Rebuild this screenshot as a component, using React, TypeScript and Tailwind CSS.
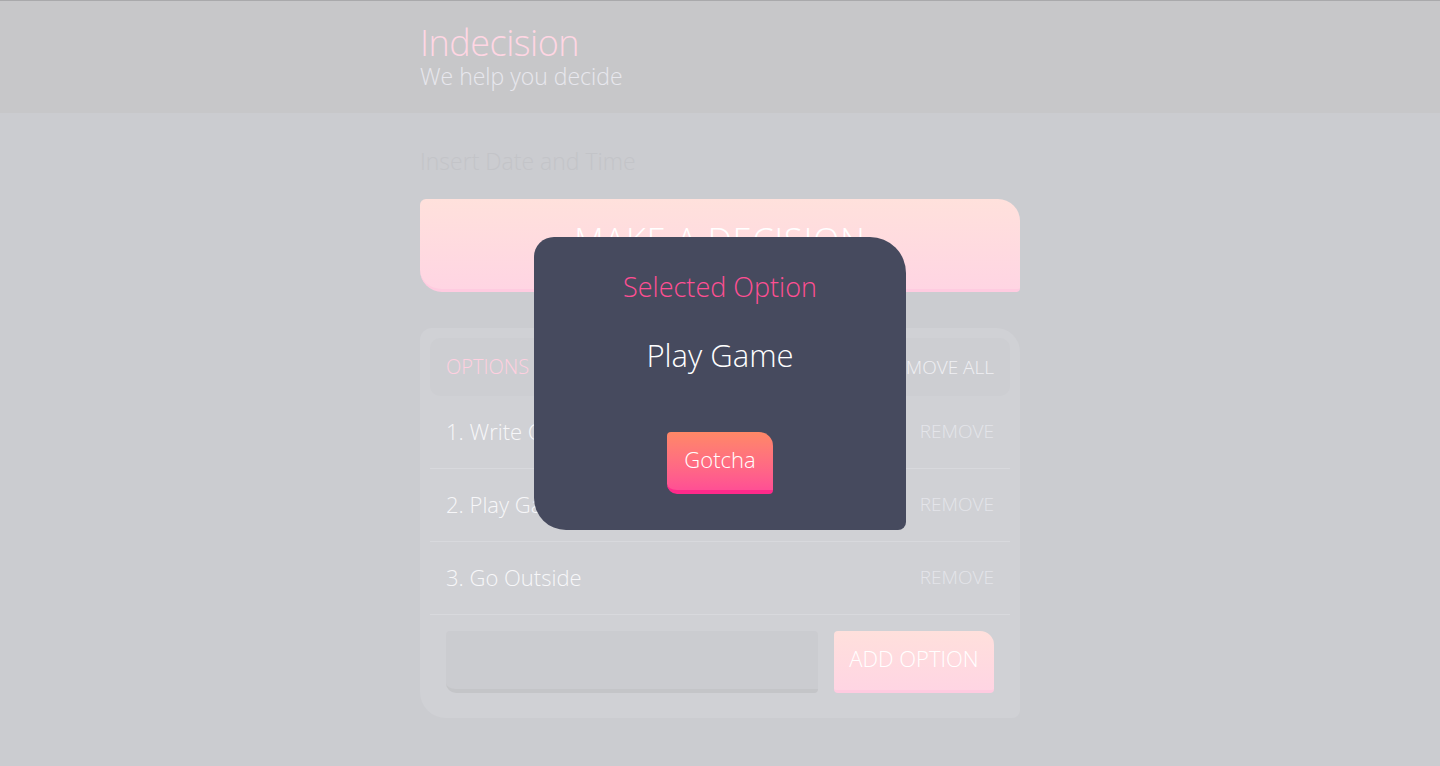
import React from "react";

const options = ["Write Code", "Play Game", "Go Outside"];

const font = { fontFamily: '"Open Sans", "Liberation Sans", sans-serif' };

export default function App() {
  return (
    <div
      className="relative min-h-[766px] bg-[#cbccd0] font-light"
      style={font}
    >
      <header className="h-[113px] bg-[#c7c7c9] border-t border-[#a9a9ab]">
        <div className="w-[600px] mx-auto pt-[26px]">
          <h1 className="text-[36px] leading-[32px] text-[#ffd6e3] tracking-[-0.5px]">
            Indecision
          </h1>
          <h2 className="mt-[5px] text-[23px] leading-[24px] text-[#e8e8ee]">
            We help you decide
          </h2>
        </div>
      </header>

      <main className="w-[600px] mx-auto pt-[34px]">
        <p className="text-[23px] leading-[28px] text-[#c3c4c8]">
          Insert Date and Time
        </p>

        <button className="mt-[24px] w-full h-[93px] pb-[8px] bg-gradient-to-b from-[#ffe1dc] to-[#ffd5e3] border-b-[3px] border-[#ffcbe0] rounded-tl-[6px] rounded-tr-[22px] rounded-bl-[22px] rounded-br-[4px] text-[34px] text-white tracking-[1px]">
          MAKE A DECISION
        </button>

        <section className="mt-[36px] bg-[#d0d1d5] rounded-tl-[12px] rounded-tr-[24px] rounded-bl-[26px] rounded-br-[8px] p-[10px] pb-[25px]">
          <div className="h-[58px] bg-[#cdced2] rounded-[10px] flex items-center justify-between px-[16px]">
            <h3 className="text-[20px] text-[#ffd0e0]">OPTIONS</h3>
            <button className="text-[19px] text-[#f0f0f4]">REMOVE ALL</button>
          </div>

          {options.map((o, i) => (
            <div
              key={o}
              className="h-[73px] pb-[2px] border-b border-[#d8d9dd] flex items-center justify-between px-[16px]"
            >
              <p className="text-[22px] text-[#f7f7f9]">
                {i + 1}. {o}
              </p>
              <button className="text-[19px] text-[#e4e5ea]">REMOVE</button>
            </div>
          ))}

          <form className="flex gap-[16px] px-[16px] pt-[16px]">
            <input
              className="flex-1 h-[62px] bg-[#cbccd0] border-b-[4px] border-[#c4c5c8] rounded-tl-[4px] rounded-bl-[10px] rounded-r-[4px] outline-none"
              type="text"
            />
            <button className="w-[160px] h-[62px] pb-[4px] bg-gradient-to-b from-[#ffe0dc] to-[#ffd5e3] border-b-[3px] border-[#ffcbe0] rounded-tl-[4px] rounded-tr-[14px] rounded-b-[4px] text-[22px] text-white">
              ADD OPTION
            </button>
          </form>
        </section>
      </main>

      <div className="absolute left-[534px] top-[237px] w-[372px] h-[293px] bg-[#464a5e] rounded-tl-[20px] rounded-tr-[36px] rounded-bl-[32px] rounded-br-[8px] flex flex-col items-center pt-[32px]">
        <h3 className="text-[27px] leading-[36px] text-[#ff4f93]">
          Selected Option
        </h3>
        <p className="mt-[30px] text-[31px] leading-[40px] text-white">
          Play Game
        </p>
        <button className="mt-[57px] w-[106px] h-[62px] pb-[4px] bg-gradient-to-b from-[#ff8866] to-[#ff4f94] border-b-[4px] border-[#ff2a8a] rounded-tl-[4px] rounded-tr-[14px] rounded-bl-[10px] rounded-br-[4px] text-[22px] text-white">
          Gotcha
        </button>
      </div>
    </div>
  );
}
